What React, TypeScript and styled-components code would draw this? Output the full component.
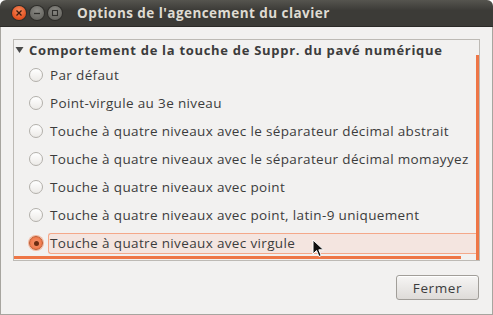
import React from 'react';
import styled, { createGlobalStyle } from 'styled-components';

const GlobalStyle = createGlobalStyle`
  html, body {
    margin: 0;
    padding: 0;
    background: #ffffff;
  }
  body {
    font-family: "Open Sans", "DejaVu Sans", sans-serif;
  }
`;

const Window = styled.div`
  width: 493px;
  height: 315px;
  display: flex;
  flex-direction: column;
  box-sizing: border-box;
  position: relative;
`;

const TitleBar = styled.div`
  height: 27px;
  flex: none;
  display: flex;
  align-items: center;
  padding-left: 12px;
  background: linear-gradient(#56554f, #3c3b37 40%, #3c3b37);
  border-radius: 6px 6px 0 0;
  border-bottom: 1px solid #2b2a27;
  box-sizing: border-box;
`;

const WinButtons = styled.div`
  display: flex;
  gap: 4px;
  margin-right: 15px;
`;

const WinButton = styled.div<{ $kind: 'close' | 'min' | 'max' }>`
  width: 14px;
  height: 14px;
  border-radius: 50%;
  display: flex;
  align-items: center;
  justify-content: center;
  background: ${(p) =>
    p.$kind === 'close'
      ? 'radial-gradient(circle at 50% 35%, #f58b5e, #e2501f 70%, #b93c12)'
      : 'radial-gradient(circle at 50% 35%, #8a8984, #6a6964 70%, #4e4d49)'};
  box-shadow: 0 0 0 1px #2e2d2a;
`;

const Title = styled.div`
  color: #dfdbd2;
  font-weight: 700;
  font-size: 13.5px;
  letter-spacing: 0.45px;
`;

const Body = styled.div`
  flex: 1;
  background: #f2f1f0;
  border: 1px solid #a7a59f;
  border-top: none;
  padding: 12px;
  display: flex;
  flex-direction: column;
  box-sizing: border-box;
`;

const Frame = styled.div`
  height: 222px;
  border: 1px solid #bdbab5;
  box-sizing: border-box;
  position: relative;
  overflow: hidden;
  color: #3c3c3c;
  font-size: 13.5px;
  letter-spacing: 0.35px;
`;

const Header = styled.div`
  height: 21px;
  display: flex;
  align-items: center;
  gap: 5px;
  padding-left: 1px;
  padding-bottom: 1px;
  box-sizing: border-box;
  font-weight: 700;
  font-size: 13px;
  letter-spacing: 0.7px;
`;

const Row = styled.div`
  height: 28px;
  display: flex;
  align-items: center;
  padding-left: 15px;
  gap: 5px;
`;

const Radio = styled.div<{ $checked?: boolean }>`
  width: 14px;
  height: 14px;
  flex: none;
  border-radius: 50%;
  box-sizing: border-box;
  display: flex;
  align-items: center;
  justify-content: center;
  border: 1px solid ${(p) => (p.$checked ? '#c05a30' : '#b3b0ab')};
  background: ${(p) =>
    p.$checked
      ? 'radial-gradient(circle, #f59570 0%, #ef7a4c 70%)'
      : 'linear-gradient(#ffffff, #eceae7)'};
  box-shadow: ${(p) => (p.$checked ? '0 0 0 1px #f3b79d' : 'none')};
`;

const Dot = styled.div`
  width: 5px;
  height: 5px;
  border-radius: 50%;
  background: #6b2c12;
`;

const Label = styled.div<{ $selected?: boolean }>`
  flex: 1;
  height: 21px;
  display: flex;
  align-items: center;
  padding-left: 1px;
  box-sizing: border-box;
  border: 1px solid ${(p) => (p.$selected ? '#f4a88a' : 'transparent')};
  border-right: none;
  border-radius: ${(p) => (p.$selected ? '3px 0 0 3px' : '0')};
  background: ${(p) => (p.$selected ? '#f4e5e0' : 'transparent')};
  white-space: nowrap;
`;

const VScroll = styled.div`
  position: absolute;
  right: 0;
  top: 15px;
  width: 3px;
  height: 210px;
  background: #ee7646;
`;

const HScroll = styled.div`
  position: absolute;
  left: 0;
  bottom: 1px;
  width: 447px;
  height: 3px;
  background: #ee7646;
`;

const Footer = styled.div`
  display: flex;
  justify-content: flex-end;
  padding-top: 14px;
  padding-right: 1px;
`;

const Button = styled.button`
  width: 83px;
  height: 25px;
  border: 1px solid #a19e99;
  border-radius: 3px;
  background: linear-gradient(#f6f5f4, #dedbd8);
  color: #3c3c3c;
  font-family: "Open Sans", "DejaVu Sans", sans-serif;
  font-size: 13.5px;
  letter-spacing: 0.6px;
  padding: 0;
  box-shadow: inset 0 1px 0 #ffffff;
`;

const Cursor = styled.svg`
  position: absolute;
  left: 312px;
  top: 239px;
`;

const options = [
  'Par défaut',
  'Point-virgule au 3e niveau',
  'Touche à quatre niveaux avec le séparateur décimal abstrait',
  'Touche à quatre niveaux avec le séparateur décimal momayyez',
  'Touche à quatre niveaux avec point',
  'Touche à quatre niveaux avec point, latin-9 uniquement',
  'Touche à quatre niveaux avec virgule',
];

const App: React.FC = () => {
  const selected = options.length - 1;
  return (
    <>
      <GlobalStyle />
      <Window>
        <TitleBar>
          <WinButtons>
            <WinButton $kind="close">
              <svg width="8" height="8" viewBox="0 0 8 8">
                <path d="M1.5 1.5 L6.5 6.5 M6.5 1.5 L1.5 6.5" stroke="#3b1b0e" strokeWidth="1.3" />
              </svg>
            </WinButton>
            <WinButton $kind="min">
              <svg width="8" height="8" viewBox="0 0 8 8">
                <path d="M1 4.5 H7" stroke="#2f2e2b" strokeWidth="1.3" />
              </svg>
            </WinButton>
            <WinButton $kind="max">
              <svg width="8" height="8" viewBox="0 0 8 8">
                <rect x="1.5" y="1.5" width="5" height="5" fill="none" stroke="#2f2e2b" strokeWidth="1.1" />
              </svg>
            </WinButton>
          </WinButtons>
          <Title>Options de l'agencement du clavier</Title>
        </TitleBar>
        <Body>
          <Frame>
            <Header>
              <svg width="9" height="8" viewBox="0 0 9 8">
                <path d="M0.5 1 H8.5 L4.5 7 Z" fill="#4a4a4a" />
              </svg>
              Comportement de la touche de Suppr. du pavé numérique
            </Header>
            {options.map((o, i) => (
              <Row key={o}>
                <Radio $checked={i === selected}>{i === selected && <Dot />}</Radio>
                <Label $selected={i === selected}>{o}</Label>
              </Row>
            ))}
            <VScroll />
            <HScroll />
          </Frame>
          <Footer>
            <Button>Fermer</Button>
          </Footer>
        </Body>
        <Cursor width="13" height="20" viewBox="0 0 13 20">
          <path d="M1 1 L1 15 L4.5 11.5 L7 17.5 L9.2 16.5 L6.8 10.8 L11.5 10.8 Z" fill="#111" stroke="#fff" strokeWidth="1" />
        </Cursor>
      </Window>
    </>
  );
};

export default App;
